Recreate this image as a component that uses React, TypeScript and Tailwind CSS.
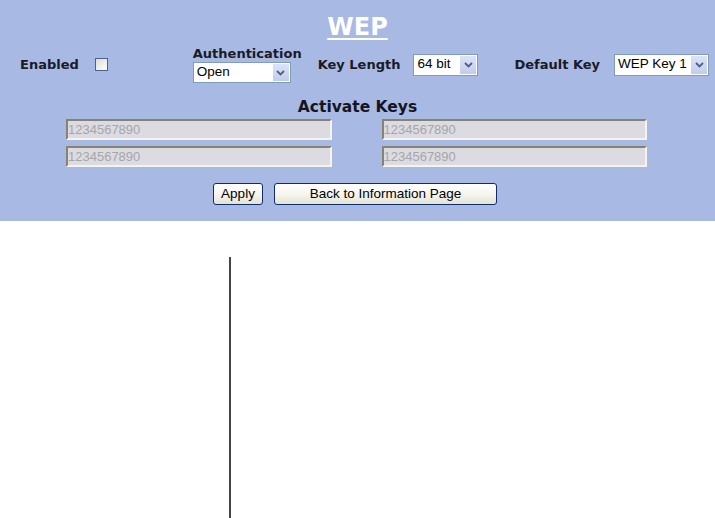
import React from "react";

const label = "font-['DejaVu_Sans',Verdana,sans-serif] text-[13px] font-bold leading-[15px] text-[#1b1b26]";

function Chevron() {
  return (
    <svg width="9" height="6" viewBox="0 0 9 6" aria-hidden="true">
      <path d="M1 1 L4.5 4.5 L8 1" fill="none" stroke="#4d5f8c" strokeWidth="1.8" />
    </svg>
  );
}

function FakeSelect({ value, width, height }: { value: string; width: string; height: string }) {
  return (
    <div className={`${width} ${height} flex border border-[#7f9db9] bg-white`}>
      <span className="flex flex-1 items-center overflow-hidden whitespace-nowrap pl-[3px] font-['Liberation_Sans',Arial,sans-serif] text-[13.5px] text-black">{value}</span>
      <span className="m-[1px] flex w-[16px] shrink-0 items-center justify-center bg-gradient-to-b from-[#dbe3f7] to-[#c2cdec]">
        <Chevron />
      </span>
    </div>
  );
}

function KeyInput() {
  return (
    <div className="flex h-[21px] items-center border-2 border-t-[#858474] border-l-[#858474] border-b-[#f5f3ea] border-r-[#f5f3ea] bg-[#dcdbe2] font-['Liberation_Sans',Arial,sans-serif] text-[13px] text-[#a6a6a6]">
      1234567890
    </div>
  );
}

function XpButton({ children, width }: { children: React.ReactNode; width: string }) {
  return (
    <button className={`${width} h-[22px] rounded-[3px] border border-[#0d2e6b] bg-gradient-to-b from-white via-[#f6f5ef] to-[#e6e3d3] font-['Liberation_Sans',Arial,sans-serif] text-[13.5px] leading-none text-black`}>
      {children}
    </button>
  );
}

export default function App() {
  return (
    <div className="h-[518px] w-[715px] overflow-hidden bg-white">
      <section className="flex h-[221px] flex-col bg-[#a8b9e3] pt-[13px]">
        <h1 className="text-center font-['DejaVu_Sans',Verdana,sans-serif] text-[24px] font-bold leading-[28px] text-white underline decoration-[2px] underline-offset-[3px]">
          WEP
        </h1>

        <div className="mt-[5px] flex items-center">
          <span className={`${label} ml-[20px]`}>Enabled</span>
          <span className="ml-[16px] h-[13px] w-[13px] border border-[#4a6191] bg-gradient-to-br from-[#dcdcd4] to-white" />
          <div className="ml-[85px] flex flex-col">
            <span className={label}>Authentication</span>
            <div className="mt-[1px]">
              <FakeSelect value="Open" width="w-[98px]" height="h-[21px]" />
            </div>
          </div>
          <span className={`${label} ml-[16px]`}>Key Length</span>
          <div className="ml-[13px]">
            <FakeSelect value="64 bit" width="w-[65px]" height="h-[22px]" />
          </div>
          <span className={`${label} ml-[36px]`}>Default Key</span>
          <div className="ml-[14px]">
            <FakeSelect value="WEP Key 1" width="w-[95px]" height="h-[22px]" />
          </div>
        </div>

        <h2 className="mt-[15px] text-center font-['DejaVu_Sans',Verdana,sans-serif] text-[15.5px] font-bold leading-[18px] text-[#151520]">
          Activate Keys
        </h2>

        <div className="ml-[66px] mt-[3px] grid w-[581px] grid-cols-2 gap-x-[50px] gap-y-[6px]">
          <KeyInput />
          <KeyInput />
          <KeyInput />
          <KeyInput />
        </div>

        <div className="mt-[16px] flex justify-center gap-[11px] pr-[5px]">
          <XpButton width="w-[50px]">Apply</XpButton>
          <XpButton width="w-[223px]">Back to Information Page</XpButton>
        </div>
      </section>

      <div className="mt-[36px] flex h-[261px]">
        <div className="w-[229px]" />
        <div className="flex-1 border-l-2 border-[#454545]" />
      </div>
    </div>
  );
}
